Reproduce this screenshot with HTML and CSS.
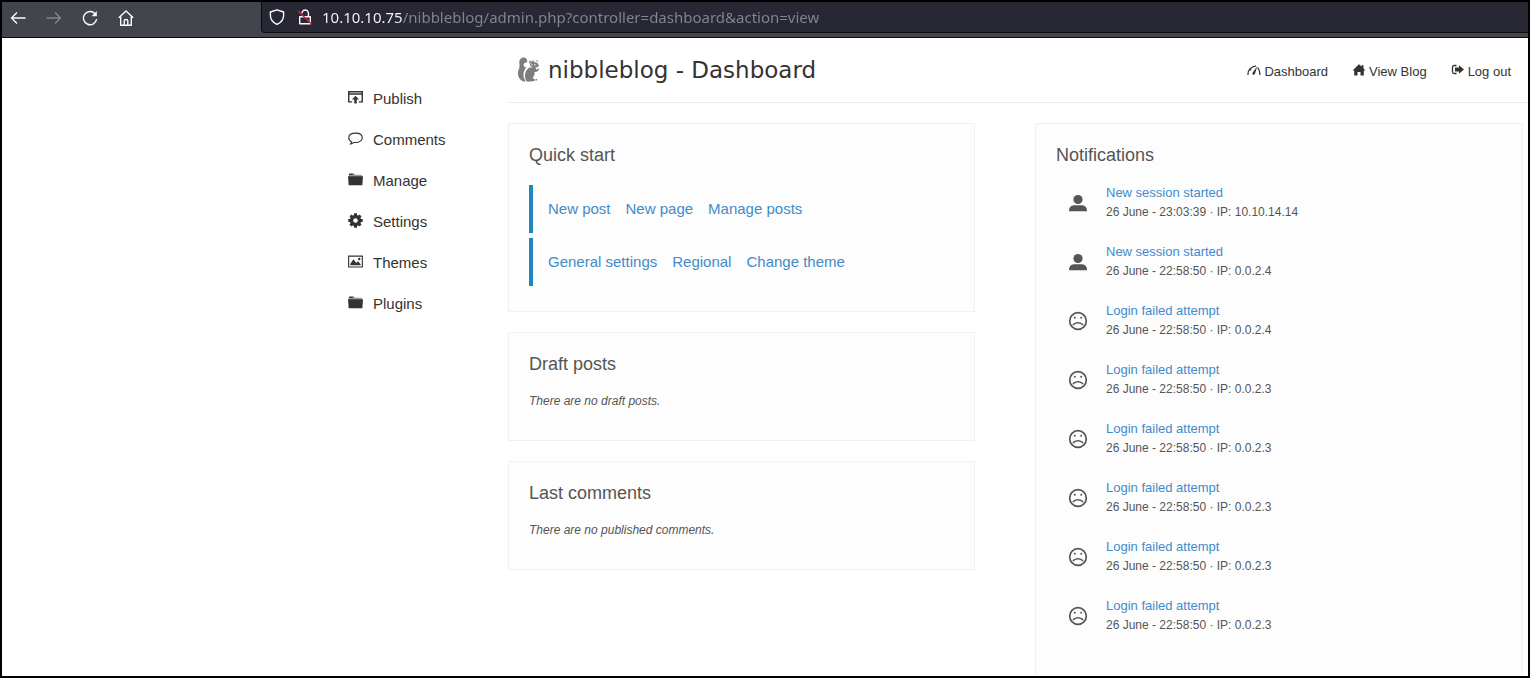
FILE: index.html
```html
<!DOCTYPE html>
<html lang="en">
<head>
<meta charset="utf-8">
<title>nibbleblog - Dashboard</title>
<link rel="stylesheet" href="styles.css">
</head>
<body>
<svg class="defs" aria-hidden="true">
  <symbol id="folder" viewBox="0 0 16 14">
    <path d="M1 3V2q0-1 1-1h4q1 0 1 1h7q1 0 1 1v1H1z" fill="#999"/><path d="M1 2.500V1.500Q1 .5 2 .5h3.500q.8 0 1 1z" fill="#333"/>
    <path d="M0 3.500h16L15.300 13H.7z" fill="#333"/>
  </symbol>
  <symbol id="user" viewBox="0 0 20 18">
    <circle cx="10" cy="5.500" r="4.600"/><path d="M1 17.200q-.2-5.700 5-6h8q5.200.3 5 6z"/>
  </symbol>
  <symbol id="sad" viewBox="0 0 20 20">
    <circle cx="10" cy="10" r="8.300" fill="none" stroke="currentColor" stroke-width="1.700"/>
    <circle cx="6.800" cy="6.800" r="1"/><circle cx="13.200" cy="6.800" r="1"/>
    <path d="M5.500 14.300v-1q4.500-3 9 0v1" fill="none" stroke="currentColor" stroke-width="1.600"/>
  </symbol>
</svg>

<header class="browser">
  <div class="browser-buttons">
    <button type="button" aria-label="Back"><svg viewBox="0 0 16 16"><path d="M15.500 8H1.500M7 2.500 1.500 8 7 13.500"/></svg></button>
    <button type="button" aria-label="Forward" disabled><svg viewBox="0 0 16 16"><path d="M.5 8h14M9 2.500 14.500 8 9 13.500"/></svg></button>
    <button type="button" aria-label="Reload"><svg viewBox="0 0 16 16"><path d="M13 3.700A6.600 6.600 0 1 0 14.600 9"/><path d="M14.800 1v5.200H9.600z" fill="currentColor" stroke="none"/></svg></button>
    <button type="button" aria-label="Home"><svg viewBox="0 0 16 16"><path d="M.8 7.800 8 1l7.200 6.800M2.700 6.500v8.700h10.600V6.500M6.200 15v-4q0-1.500 1.800-1.500T9.800 11v4"/></svg></button>
  </div>
  <div class="address">
    <svg viewBox="0 0 16 16"><path d="M8 .8 14.600 3v3.500q0 6-6.600 8.900Q1.400 12.500 1.400 6.500V3z"/></svg>
    <svg viewBox="0 0 16 16"><path d="M5 4.200a3.200 3.200 0 0 1 6.400 0V7.500M2.700 7.800h10.600v7H2.700z"/><path d="M1 2 14.500 15" stroke="#e3174b"/></svg>
    <input type="text" aria-label="Address" value="10.10.10.75/nibbleblog/admin.php?controller=dashboard&amp;action=view">
  </div>
</header>

<div class="page">
  <nav class="sidebar" aria-label="Sections">
    <a href="#"><svg viewBox="0 0 16 16"><path d="M4.500 12.700H.8V1.800h14.400v10.900h-3.700M.8 4.300h14.400" fill="none" stroke="#333" stroke-width="1.500"/><path d="M8 6 11.800 10H9.300v4.500H6.700V10H4.200z"/></svg>Publish</a>
    <a href="#"><svg viewBox="0 0 16 16"><path d="M4 11.700Q.8 10.200.8 7.200C.8 4 4 2.200 8.200 2.200s7 2 7 4.900-3 5.200-7.200 5.200q-.8 0-1.600-.1-1.700 1.700-4.400 1.900Q4 13.200 4 11.700z" fill="none" stroke="#333" stroke-width="1.200"/></svg>Comments</a>
    <a href="#"><svg viewBox="0 0 16 14"><use href="#folder"/></svg>Manage</a>
    <a href="#"><svg viewBox="0 0 16 16"><circle cx="8" cy="8" r="4.300" fill="none" stroke="#333" stroke-width="3.600"/><path d="M8 .3v3.200M8 12.500v3.200M.3 8h3.200M12.500 8h3.200M2.600 2.600l2.200 2.200M11.200 11.200l2.200 2.200M2.600 13.400l2.200-2.200M11.200 4.800l2.200-2.200" stroke="#333" stroke-width="3.200"/></svg>Settings</a>
    <a href="#"><svg viewBox="0 0 16 16"><path d="M.7 2.200h14.600v11.600H.7z" fill="none" stroke="#333" stroke-width="1.200"/><path d="M2.500 12V10.500L5.800 5.500l3 4 1.800-1.700 2.900 3V12z"/><circle cx="12" cy="5.300" r="1.300"/></svg>Themes</a>
    <a href="#"><svg viewBox="0 0 16 14"><use href="#folder"/></svg>Plugins</a>
  </nav>

  <main class="content">
    <header class="topbar">
      <svg class="logo" viewBox="0 0 24 26">
        <path d="M11.300 5.200C11.500 2.400 9.800.6 7.600.6 4.800.6 3.200 3 3.300 5.800c.1 2.200.7 3.700-.2 5.700-1.100 2.500-1.500 4.500-.9 7 .8 3.200 3 5.700 6.300 6.300l1-.8C7.200 20.500 7 17 8 14.200c.5-1.500 1.500-2.700 2.200-4-1.500.1-2.700-.9-2.600-2.400.1-1.600 1.800-2.700 3.700-2.600z"/>
        <path d="M10.300 24C8.500 20 8.400 15.500 11.300 12.200c1-1.200 2.300-1.700 3.400-2.200L13.600 6.500l-.4-3.200 2.500 1.400L17.300 3l1.200 1.800 3.200 1.500 1.300 2.500-1.700 1.400-2 .3 1.200 2.300 2.400-1.300.4 1-2.400 2.300-2.300.2q.5 3.500-2 6.300l2 .7.200 2-6.900.8q-1 0-1.200-.8z"/>
        <path d="m14.500 6.500 2 1.500M18 7.500l1.800.7M17.500 4.500l2 .5M14 9.800l2.300.6" fill="none" stroke="#fff" stroke-width=".9"/>
        <path d="m19.500 2.700 2.200 1 .6 2M19.500 22h1.600v1.400h-1.600z"/>
      </svg>
      <h1>nibbleblog - Dashboard</h1>
      <nav class="links" aria-label="Account">
        <a href="#"><svg viewBox="0 0 14 12"><path d="M1 11Q.6 3.500 9 1.800M10.800 3.500q2 3 2.200 7.500M3.200 5.500l1 .7" fill="none" stroke="#333" stroke-width="1.300"/><path d="M10.300 2.300 8 9.800q-1 1.700-2.300.7-.8-1 0-2z"/></svg>Dashboard</a>
        <a href="#"><svg viewBox="0 0 14 12"><path d="M7 .3 9.500 2.600V1.200h2v3.200L13.500 6.500h-1.700V11.500H8.500V8h-3v3.500H2.200V6.500H.5z"/></svg>View Blog</a>
        <a href="#"><svg viewBox="0 0 14 12"><path d="M5.500 1.500H3.300Q1.500 1.500 1.500 3v5q0 1.500 1.800 1.500h2.200" fill="none" stroke="#333" stroke-width="1.300"/><path d="M8 1.300 13 5.500 8 9.700V7.500H4v-4h4z"/></svg>Log out</a>
      </nav>
    </header>

    <div class="columns">
      <div class="stack">
        <section class="panel">
          <h2>Quick start</h2>
          <div class="shortcuts">
            <div class="shortcut-row"><a href="#">New post</a><a href="#">New page</a><a href="#">Manage posts</a></div>
            <div class="shortcut-row"><a href="#">General settings</a><a href="#">Regional</a><a href="#">Change theme</a></div>
          </div>
        </section>
        <section class="panel"><h2>Draft posts</h2><p class="empty">There are no draft posts.</p></section>
        <section class="panel"><h2>Last comments</h2><p class="empty">There are no published comments.</p></section>
      </div>

      <section class="panel notifications">
        <h2>Notifications</h2>
        <ul>
          <li><svg><use href="#user"/></svg><div><a href="#">New session started</a><p>26 June - 23:03:39 · IP: 10.10.14.14</p></div></li>
          <li><svg><use href="#user"/></svg><div><a href="#">New session started</a><p>26 June - 22:58:50 · IP: 0.0.2.4</p></div></li>
          <li><svg><use href="#sad"/></svg><div><a href="#">Login failed attempt</a><p>26 June - 22:58:50 · IP: 0.0.2.4</p></div></li>
          <li><svg><use href="#sad"/></svg><div><a href="#">Login failed attempt</a><p>26 June - 22:58:50 · IP: 0.0.2.3</p></div></li>
          <li><svg><use href="#sad"/></svg><div><a href="#">Login failed attempt</a><p>26 June - 22:58:50 · IP: 0.0.2.3</p></div></li>
          <li><svg><use href="#sad"/></svg><div><a href="#">Login failed attempt</a><p>26 June - 22:58:50 · IP: 0.0.2.3</p></div></li>
          <li><svg><use href="#sad"/></svg><div><a href="#">Login failed attempt</a><p>26 June - 22:58:50 · IP: 0.0.2.3</p></div></li>
          <li><svg><use href="#sad"/></svg><div><a href="#">Login failed attempt</a><p>26 June - 22:58:50 · IP: 0.0.2.3</p></div></li>
        </ul>
      </section>
    </div>
  </main>
</div>
</body>
</html>
```
FILE: styles.css
```css
* { box-sizing: border-box; }

body {
  margin: 0;
  min-height: 100vh;
  display: flex;
  flex-direction: column;
  border: 2px solid #000;
  background: #fff;
  color: #555;
  font-family: "Liberation Sans", Arial, sans-serif;
}

h1, h2, p, ul { margin: 0; padding: 0; font-weight: normal; }
a { color: #428bca; text-decoration: none; }
svg { flex: none; fill: currentColor; }
.defs { position: absolute; width: 0; height: 0; }

/* Browser toolbar */
.browser {
  display: flex;
  height: 36px;
  background: #42454c;
  border-bottom: 1px solid #0c0c0d;
}
.browser-buttons {
  display: flex;
  align-items: center;
  gap: 20px;
  width: 259px;
  padding: 0 0 4px 8px;
}
.browser button {
  display: flex;
  padding: 0;
  border: 0;
  background: none;
  color: #fbfbfe;
}
.browser button:disabled { color: #85868b; }
.browser svg {
  width: 16px;
  height: 16px;
  fill: none;
  stroke: currentColor;
  stroke-width: 1.4;
  stroke-linejoin: round;
}
.address {
  flex: 1;
  display: flex;
  align-items: center;
  gap: 12px;
  height: 31px;
  padding-left: 7px;
  background: #272833;
  border: 1px solid #0c0c0d;
  border-width: 0 0 1px 1px;
  border-radius: 0 0 0 4px;
  color: #fbfbfe;
}
.address input {
  flex: 1;
  min-width: 0;
  margin-left: -3px;
  padding: 0;
  border: 0;
  outline: 0;
  font: 15px/22px "Noto Sans", sans-serif;
  color: transparent;
  /* host in white, path dimmed */
  background: linear-gradient(90deg, #fbfbfe 81px, #85868d 81px);
  background-clip: text;
  -webkit-background-clip: text;
}

/* Page */
.page { flex: 1; display: flex; }
.sidebar {
  width: 506px;
  padding: 40px 0 0 346px;
}
.sidebar a {
  display: flex;
  align-items: center;
  gap: 10px;
  height: 41px;
  font-size: 15px;
  color: #333;
}
.sidebar svg { width: 15px; height: 15px; margin-bottom: 3px; }

.content { flex: 1; display: flex; flex-direction: column; }
.topbar {
  display: flex;
  align-items: center;
  height: 65px;
  padding: 0 17px 0 8px;
  border-bottom: 1px solid #eee;
  color: #333;
}
.logo { width: 24px; height: 26px; fill: #7d7d7d; }
.topbar h1 {
  margin-left: 8px;
  font: 23px/28px "DejaVu Sans", sans-serif;
}
.links {
  display: flex;
  gap: 24px;
  margin-left: auto;
  padding-top: 2px;
  font-size: 13px;
}
.links a { display: flex; align-items: center; gap: 3px; color: #333; }
.links svg { width: 14px; height: 12px; margin-bottom: 2px; }

.columns {
  flex: 1;
  display: grid;
  grid-template-columns: 467fr 488fr;
  gap: 60px;
  padding: 20px 5px 0 0;
}
.stack { display: flex; flex-direction: column; gap: 20px; }
.panel {
  padding: 20px;
  background: #fdfdfd;
  border: 1px solid #f1f1f1;
}
.panel h2 {
  margin-bottom: 17px;
  font-size: 18px;
  line-height: 22px;
}
.shortcuts {
  display: flex;
  flex-direction: column;
  gap: 5px;
  padding: 2px 0 5px;
}
.shortcut-row {
  display: flex;
  align-items: center;
  gap: 15px;
  height: 48px;
  padding: 0 0 2px 15px;
  border-left: 4px solid #1f87bd;
  font-size: 15px;
}
.empty {
  margin-bottom: 10px;
  font-size: 12px;
  line-height: 18px;
  font-style: italic;
}

.notifications { border-bottom: 0; }
.notifications ul { list-style: none; }
.notifications li {
  display: flex;
  align-items: center;
  gap: 18px;
  padding: 0 0 19px 12px;
}
.notifications li svg { width: 20px; height: 20px; }
.notifications a { display: block; font-size: 13px; line-height: 19px; }
.notifications p { font-size: 12px; line-height: 21px; }
```
